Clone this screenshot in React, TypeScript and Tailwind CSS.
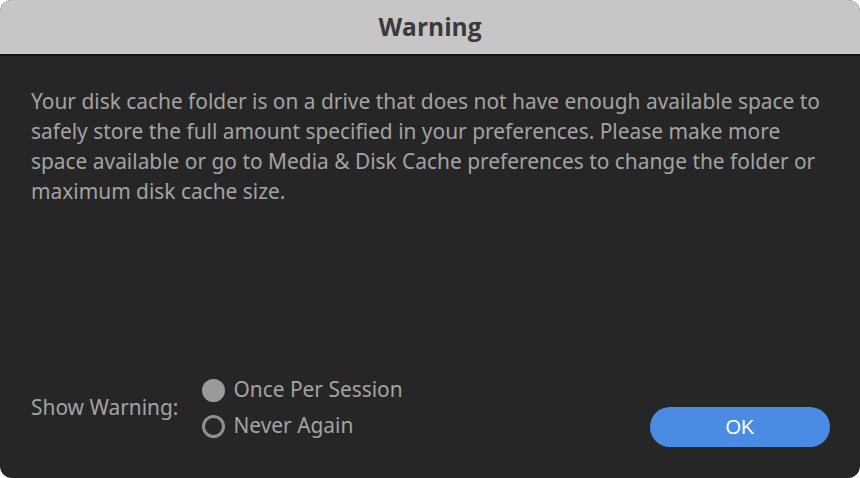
import React from "react";

export default function App() {
  const font = { fontFamily: '"Noto Sans", "Open Sans", sans-serif' };
  return (
    <div className="w-[860px] h-[478px] bg-white" style={font}>
      <div className="w-[860px] h-[478px] rounded-[12px] overflow-hidden flex flex-col bg-[#262626]">
        <div className="h-[56px] bg-[#c6c6c6] border-b-2 border-[#141414] flex items-center justify-center">
          <span className="text-[24.5px] font-bold text-[#3a3a3a] leading-none" style={{ fontFamily: '"Open Sans", sans-serif' }}>Warning</span>
        </div>
        <div className="flex-1 flex flex-col pl-[31px] pr-[30px] pt-[30px] pb-[38px]">
          <p className="text-[20.9px] leading-[30px] text-[#a3a3a3]">
            Your disk cache folder is on a drive that does not have enough available space to safely store the full amount specified in your preferences. Please make more space available or go to Media &amp; Disk Cache preferences to change the folder or maximum disk cache size.
          </p>
          <div className="flex-1" />
          <div className="flex items-end justify-between">
            <div className="flex items-center gap-[24px]">
              <span className="text-[20.9px] text-[#a3a3a3]">Show Warning:</span>
              <div className="flex flex-col gap-[8px]">
                <div className="flex items-center gap-[8px] h-[28px]">
                  <span className="w-[23px] h-[23px] rounded-full bg-[#9a9a9a]" />
                  <span className="text-[20.9px] text-[#a3a3a3]">Once Per Session</span>
                </div>
                <div className="flex items-center gap-[8px] h-[28px]">
                  <span className="w-[23px] h-[23px] rounded-full border-[3px] border-[#8f8f8f]" />
                  <span className="text-[20.9px] text-[#a3a3a3]">Never Again</span>
                </div>
              </div>
            </div>
            <button className="w-[180px] h-[40px] rounded-full bg-[#4a8be3] text-white text-[20px] -mb-[7px]" style={{ fontFamily: '"Liberation Sans", sans-serif' }}>
              OK
            </button>
          </div>
        </div>
      </div>
    </div>
  );
}
